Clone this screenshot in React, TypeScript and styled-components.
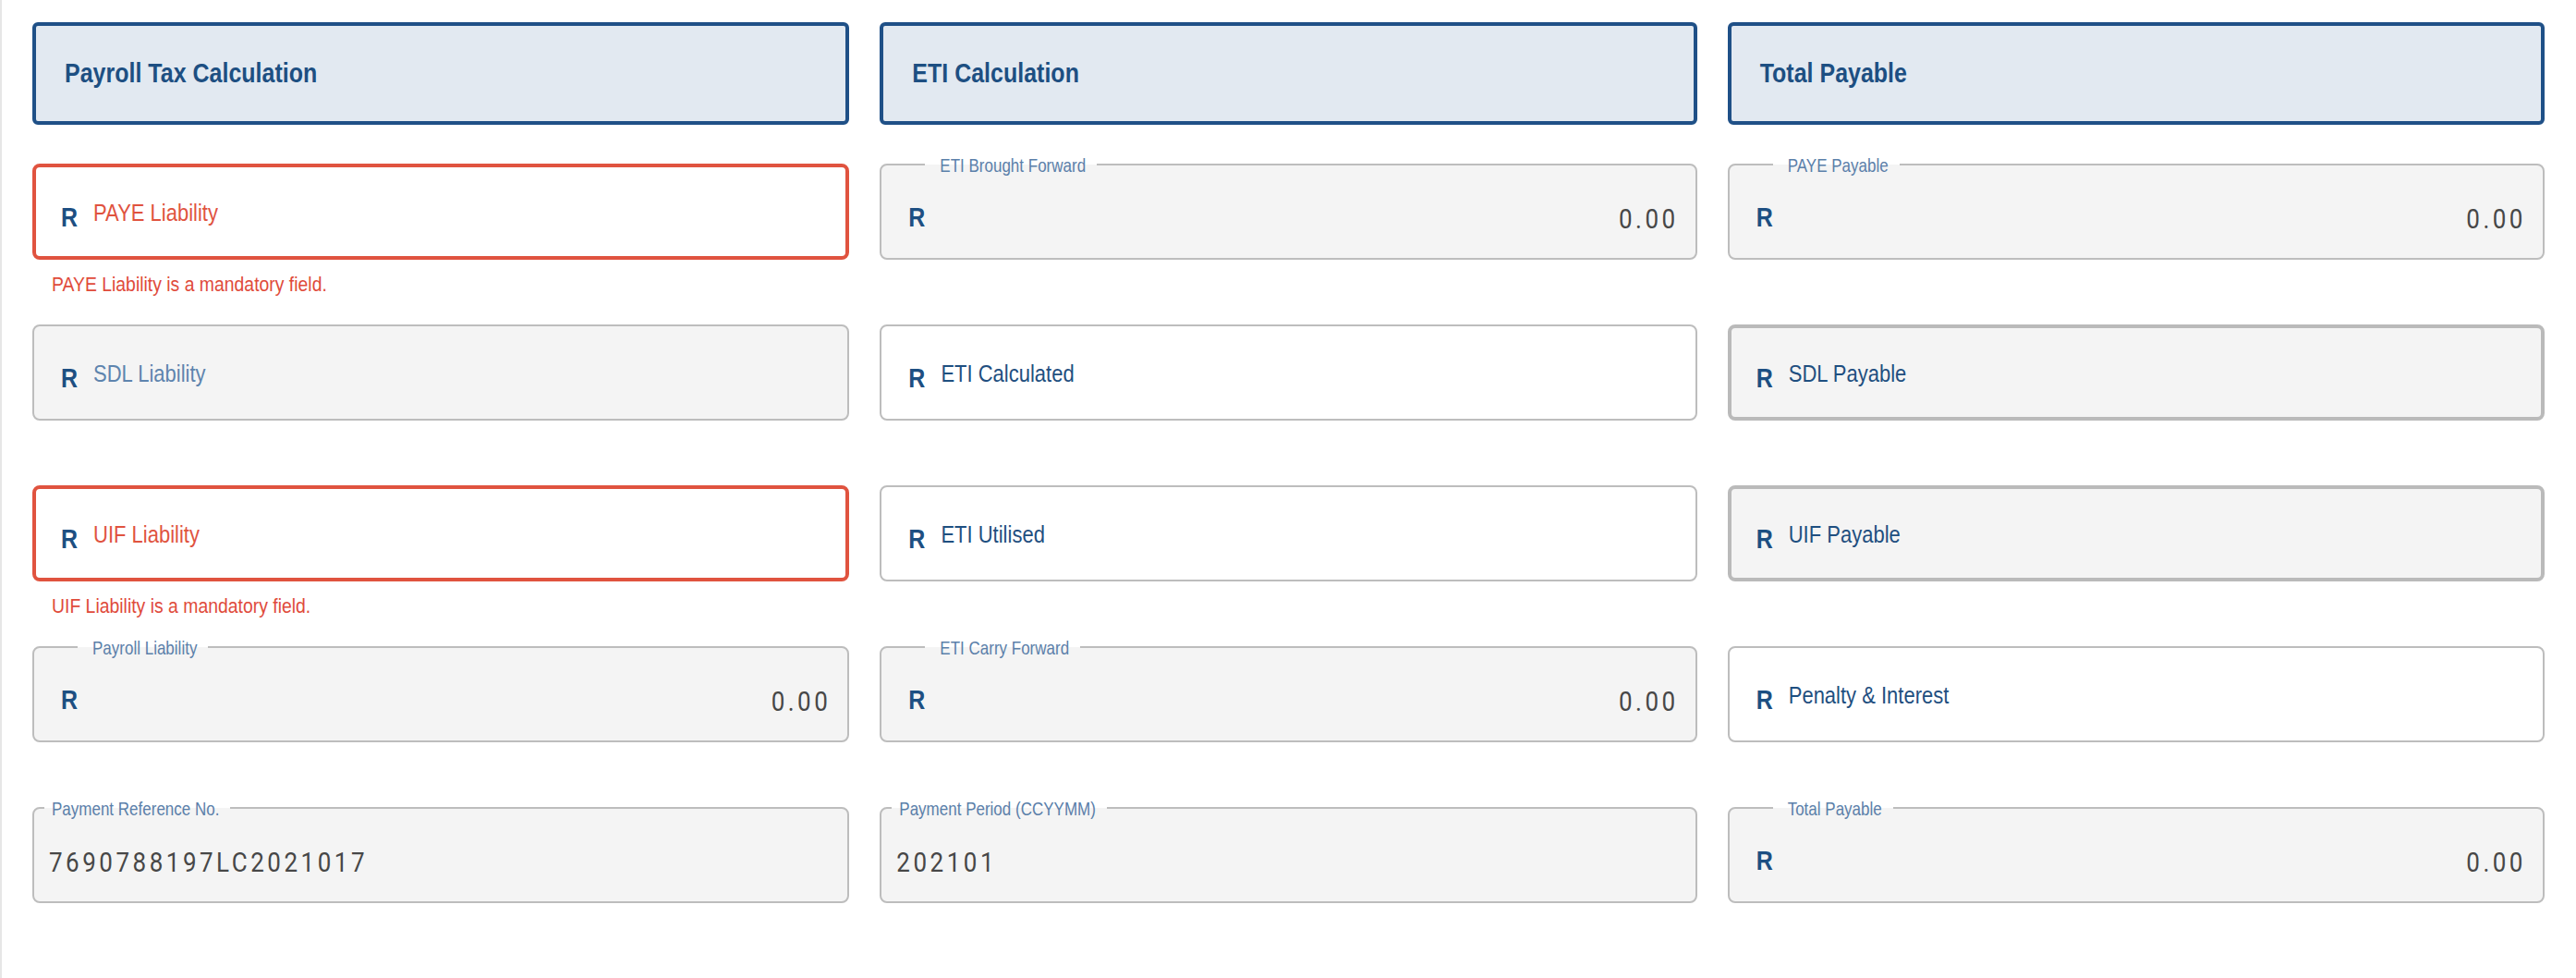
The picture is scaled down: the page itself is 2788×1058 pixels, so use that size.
import styled, { createGlobalStyle, css } from 'styled-components';

const GlobalStyle = createGlobalStyle`
  html, body {
    margin: 0;
    padding: 0;
    background: #fff;
  }
  body {
    font-family: "Liberation Sans", Arial, sans-serif;
  }
`;

// the source renders its type a little taller than Arial, so stretch it
const tall = css`
  display: inline-block;
  transform: scaleY(1.17);
  white-space: nowrap;
`;

type Tone = 'error' | 'white' | 'grey' | 'thick';

const toneBorder: Record<Tone, string> = {
  error: '4px solid #e0533f',
  white: '2px solid #bdbdbd',
  grey: '2px solid #bdbdbd',
  thick: '4px solid #bababa',
};

const toneWidth: Record<Tone, number> = { error: 4, white: 2, grey: 2, thick: 4 };

const Page = styled.div`
  box-sizing: border-box;
  min-height: 1058px;
  border-left: 2px solid #e6e6e6;
  padding: 24px 34px 0 33px;
  display: grid;
  grid-template-columns: repeat(3, 1fr);
  column-gap: 33px;
  align-items: start;
`;

const Column = styled.section`
  display: flex;
  flex-direction: column;
  min-width: 0;
`;

const Header = styled.div`
  box-sizing: border-box;
  height: 111px;
  margin-bottom: 42px;
  border: 4px solid #1f5087;
  border-radius: 6px;
  background: #e2e9f1;
  display: flex;
  align-items: center;
  padding-left: 31px;
`;

const HeaderTitle = styled.h2`
  ${tall};
  margin: 0;
  font-size: 25px;
  font-weight: 700;
  color: #1d4f82;
`;

const Slot = styled.div`
  height: 174px;
  display: flex;
  flex-direction: column;
`;

const Box = styled.div<{ $tone: Tone; $plain?: boolean }>`
  position: relative;
  box-sizing: border-box;
  height: 104px;
  border: ${p => toneBorder[p.$tone]};
  border-radius: 8px;
  background: ${p => (p.$tone === 'white' || p.$tone === 'error' ? '#fff' : '#f4f4f4')};
  display: flex;
  align-items: center;
  padding-left: ${p => (p.$plain ? 18 : 31) - toneWidth[p.$tone]}px;
  padding-right: ${p => 20 - toneWidth[p.$tone]}px;
`;

const Legend = styled.span<{ $plain?: boolean; $bg: string }>`
  position: absolute;
  top: -9px;
  left: ${p => (p.$plain ? 11 : 47)}px;
  height: 20px;
  line-height: 20px;
  padding: ${p => (p.$plain ? '0 12px 0 8px' : '0 12px 0 16px')};
  font-size: 17px;
  color: #5b80aa;
  background: linear-gradient(#fff 0 8px, ${p => p.$bg} 8px);
  white-space: nowrap;

  & > span {
    ${tall};
  }
`;

const Currency = styled.span`
  ${tall};
  margin-top: 12px;
  margin-right: 17px;
  font-size: 25px;
  font-weight: 700;
  color: #1d4f82;
`;

const Placeholder = styled.span<{ $color: string }>`
  ${tall};
  margin-top: 3px;
  font-size: 22px;
  color: ${p => p.$color};
`;

const Value = styled.span<{ $right?: boolean }>`
  ${tall};
  margin-top: 14px;
  margin-left: ${p => (p.$right ? 'auto' : '0')};
  font-family: Roboto, "Liberation Sans", sans-serif;
  font-size: 26px;
  letter-spacing: 3.5px;
  color: #474747;
`;

const ErrorText = styled.div`
  margin-top: 15px;
  padding-left: 21px;
  font-size: 19.4px;
  color: #e04b3b;

  & > span {
    ${tall};
  }
`;

interface FieldSpec {
  tone: Tone;
  label?: string;
  placeholder?: string;
  placeholderColor?: string;
  value?: string;
  noCurrency?: boolean;
  error?: string;
}

interface ColumnSpec {
  title: string;
  fields: FieldSpec[];
}

const BLUE = '#1f4f80';
const MUTED = '#5e84ae';
const RED = '#e0533f';

const columns: ColumnSpec[] = [
  {
    title: 'Payroll Tax Calculation',
    fields: [
      { tone: 'error', placeholder: 'PAYE Liability', placeholderColor: RED, error: 'PAYE Liability is a mandatory field.' },
      { tone: 'grey', placeholder: 'SDL Liability', placeholderColor: MUTED },
      { tone: 'error', placeholder: 'UIF Liability', placeholderColor: RED, error: 'UIF Liability is a mandatory field.' },
      { tone: 'grey', label: 'Payroll Liability', value: '0.00' },
      { tone: 'grey', label: 'Payment Reference No.', value: '7690788197LC2021017', noCurrency: true },
    ],
  },
  {
    title: 'ETI Calculation',
    fields: [
      { tone: 'grey', label: 'ETI Brought Forward', value: '0.00' },
      { tone: 'white', placeholder: 'ETI Calculated', placeholderColor: BLUE },
      { tone: 'white', placeholder: 'ETI Utilised', placeholderColor: BLUE },
      { tone: 'grey', label: 'ETI Carry Forward', value: '0.00' },
      { tone: 'grey', label: 'Payment Period (CCYYMM)', value: '202101', noCurrency: true },
    ],
  },
  {
    title: 'Total Payable',
    fields: [
      { tone: 'grey', label: 'PAYE Payable', value: '0.00' },
      { tone: 'thick', placeholder: 'SDL Payable', placeholderColor: BLUE },
      { tone: 'thick', placeholder: 'UIF Payable', placeholderColor: BLUE },
      { tone: 'white', placeholder: 'Penalty & Interest', placeholderColor: BLUE },
      { tone: 'grey', label: 'Total Payable', value: '0.00' },
    ],
  },
];

function Field({ spec }: { spec: FieldSpec }) {
  const bg = spec.tone === 'white' || spec.tone === 'error' ? '#fff' : '#f4f4f4';
  return (
    <Slot>
      <Box $tone={spec.tone} $plain={spec.noCurrency}>
        {spec.label && (
          <Legend $plain={spec.noCurrency} $bg={bg}>
            <span>{spec.label}</span>
          </Legend>
        )}
        {!spec.noCurrency && <Currency>R</Currency>}
        {spec.placeholder && (
          <Placeholder $color={spec.placeholderColor ?? BLUE}>{spec.placeholder}</Placeholder>
        )}
        {spec.value && <Value $right={!spec.noCurrency}>{spec.value}</Value>}
      </Box>
      {spec.error && (
        <ErrorText>
          <span>{spec.error}</span>
        </ErrorText>
      )}
    </Slot>
  );
}

export default function App() {
  return (
    <>
      <GlobalStyle />
      <Page>
        {columns.map(col => (
          <Column key={col.title}>
            <Header>
              <HeaderTitle>{col.title}</HeaderTitle>
            </Header>
            {col.fields.map(f => (
              <Field key={f.label ?? f.placeholder} spec={f} />
            ))}
          </Column>
        ))}
      </Page>
    </>
  );
}
